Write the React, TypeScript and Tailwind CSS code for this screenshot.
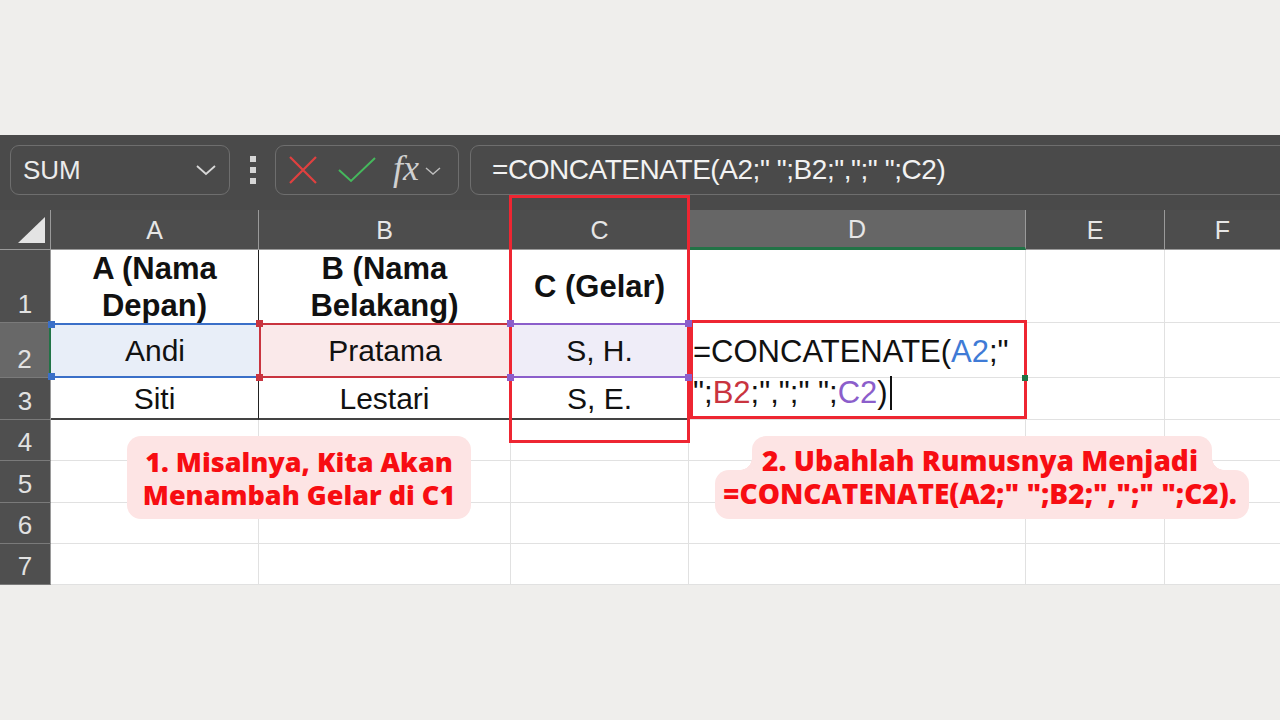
import React from "react";

const sans = { fontFamily: '"Liberation Sans", Arial, sans-serif' };

function Handle({ pos, color }: { pos: string; color: string }) {
  return <div className={`absolute z-10 w-[7px] h-[7px] ${pos} ${color}`} />;
}

export default function App() {
  return (
    <div className="relative w-[1280px] h-[720px] bg-[#efeeec] overflow-hidden" style={sans}>
      <div className="h-[135px]" />
      <div className="bg-[#4a4a4a]">
        {/* Formula bar */}
        <div className="h-[75px] flex items-start pt-[10px] pl-[10px] overflow-hidden">
          <div className="w-[220px] h-[50px] shrink-0 rounded-[9px] border border-[#6e6e6e] flex items-center justify-between pl-[12px] pr-[12px]">
            <span className="text-[26px] text-[#ececec] leading-none">SUM</span>
            <svg width="22" height="14" viewBox="0 0 22 14">
              <path d="M2 3 L11 11 L20 3" fill="none" stroke="#d8d8d8" strokeWidth="1.8" />
            </svg>
          </div>
          <div className="w-[45px] h-[50px] shrink-0 flex flex-col items-center justify-center gap-[5px]">
            <div className="w-[6px] h-[6px] bg-[#d6d6d6]" />
            <div className="w-[6px] h-[6px] bg-[#d6d6d6]" />
            <div className="w-[6px] h-[6px] bg-[#d6d6d6]" />
          </div>
          <div className="w-[184px] h-[50px] shrink-0 rounded-[9px] border border-[#6e6e6e] flex items-center pl-[12px]">
            <svg width="30" height="30" viewBox="0 0 30 30">
              <path d="M2 2 L28 28 M28 2 L2 28" stroke="#e0403f" strokeWidth="2.2" />
            </svg>
            <svg width="38" height="28" viewBox="0 0 38 28" className="ml-[20px]">
              <path d="M1 14 L13 25 L37 2" fill="none" stroke="#45b85c" strokeWidth="2" />
            </svg>
            <span className="ml-[17px] text-[36px] italic text-[#d0d0d0] leading-none -mt-[4px]" style={{ fontFamily: '"Liberation Serif", "Times New Roman", serif' }}>
              fx
            </span>
            <svg width="16" height="10" viewBox="0 0 16 10" className="ml-[6px] mt-[2px]">
              <path d="M1 2 L8 8 L15 2" fill="none" stroke="#bdbdbd" strokeWidth="1.4" />
            </svg>
          </div>
          <div className="ml-[11px] w-[830px] h-[50px] shrink-0 rounded-[9px] border border-[#6e6e6e] flex items-center pl-[21px]">
            <span className="text-[28px] tracking-[-0.45px] text-[#f2f2f2] leading-none whitespace-pre">
              =CONCATENATE(A2;" ";B2;",";" ";C2)
            </span>
          </div>
        </div>

        {/* Grid */}
        <div className="grid grid-cols-[51px_208px_252px_178px_337px_139px_115px] grid-rows-[40px_73px_55px_42px_41px_42px_41px_41px] bg-white">
          {/* Header row */}
          <div className="bg-[#4d4d4d] border-r border-b border-[#9a9a9a] relative">
            <svg width="51" height="40" viewBox="0 0 51 40" className="absolute left-0 top-0">
              <polygon points="18,33 45,33 45,7" fill="#e4e4e4" />
            </svg>
          </div>
          <div className="bg-[#4d4d4d] border-r border-b border-[#9a9a9a] flex items-center justify-center pt-[3px] text-[25px] text-[#e6e6e6]">A</div>
          <div className="bg-[#4d4d4d] border-r border-b border-[#9a9a9a] flex items-center justify-center pt-[3px] text-[25px] text-[#e6e6e6]">B</div>
          <div className="bg-[#4d4d4d] border-r border-b border-[#9a9a9a] flex items-center justify-center pt-[3px] text-[25px] text-[#e6e6e6]">C</div>
          <div className="bg-[#666666] border-r border-[#9a9a9a] border-b-[3px] border-b-[#217346] flex items-center justify-center pt-[3px] text-[25px] text-[#e6e6e6]">D</div>
          <div className="bg-[#4d4d4d] border-r border-b border-[#9a9a9a] flex items-center justify-center pt-[3px] text-[25px] text-[#e6e6e6]">E</div>
          <div className="bg-[#4d4d4d] border-b border-[#9a9a9a] flex items-center justify-center pt-[3px] text-[25px] text-[#e6e6e6]">F</div>

          {/* Row 1 */}
          <div className="bg-[#4f4f4f] border-r border-[#9a9a9a] border-b border-b-[#7a7a7a] flex items-end justify-center pb-[5px] text-[26px] leading-none text-[#e2e2e2]">1</div>
          <div className="border-r border-r-[#222] overflow-hidden text-center font-bold text-[31px] leading-[37px] text-[#111]">
            A (Nama<br />Depan)
          </div>
          <div className="border-r border-r-[#222] overflow-hidden text-center font-bold text-[31px] leading-[37px] text-[#111]">
            B (Nama<br />Belakang)
          </div>
          <div className="border-r border-r-[#222] flex items-center justify-center pt-[2px] font-bold text-[31px] text-[#111]">
            C (Gelar)
          </div>
          <div className="border-r border-b border-[#e1e1e1]" />
          <div className="border-r border-b border-[#e1e1e1]" />
          <div className="border-b border-[#e1e1e1]" />

          {/* Row 2 */}
          <div className="bg-[#686868] border-r-2 border-r-[#217346] border-b border-b-[#7a7a7a] flex items-end justify-center pb-[5px] text-[26px] leading-none text-[#e2e2e2]">2</div>
          <div className="relative bg-[#e8eef8] border-y-2 border-[#3a6fc8] flex items-center justify-center text-[30px] text-[#111]">
            Andi
            <Handle pos="-left-[3px] -top-[4px] w-[5px]" color="bg-[#3a6fc8]" />
            <Handle pos="-left-[3px] -bottom-[4px] w-[5px]" color="bg-[#3a6fc8]" />
          </div>
          <div className="relative bg-[#fae9ea] border-2 border-[#c9343f] flex items-center justify-center text-[30px] text-[#111]">
            Pratama
            <Handle pos="-left-[5px] -top-[5px]" color="bg-[#c9343f]" />
            <Handle pos="-left-[5px] -bottom-[5px]" color="bg-[#c9343f]" />
          </div>
          <div className="relative bg-[#efedf8] border-y-2 border-[#8b5ecb] border-r border-r-[#222] flex items-center justify-center text-[30px] text-[#111]">
            S, H.
            <Handle pos="-left-[4px] -top-[5px]" color="bg-[#8b5ecb]" />
            <Handle pos="-left-[4px] -bottom-[5px]" color="bg-[#8b5ecb]" />
            <Handle pos="-right-[4px] -top-[5px]" color="bg-[#8b5ecb]" />
            <Handle pos="-right-[4px] -bottom-[5px]" color="bg-[#8b5ecb]" />
          </div>
          <div className="relative border-r-2 border-r-[#217346] border-b border-b-[#e1e1e1]">
            <div className="pt-[8px] pl-[4px] text-[31px] leading-[41px] text-[#111] whitespace-pre">
              =CONCATENATE(<span className="text-[#3f7bd6]">A2</span>;"
              <br />
              ";<span className="text-[#c9343f]">B2</span>;",";" ";<span className="text-[#8b5ecb]">C2</span>)
              <span className="inline-block align-middle ml-[2px] -mt-[4px] w-[2px] h-[34px] bg-[#111]" />
            </div>
            <div className="absolute z-10 -right-[4px] -bottom-[4px] w-[6px] h-[6px] bg-[#217346]" />
          </div>
          <div className="border-r border-b border-[#e1e1e1]" />
          <div className="border-b border-[#e1e1e1]" />

          {/* Row 3 */}
          <div className="bg-[#4f4f4f] border-r border-[#9a9a9a] border-b border-b-[#7a7a7a] flex items-end justify-center pb-[5px] text-[26px] leading-none text-[#e2e2e2]">3</div>
          <div className="border-r border-r-[#222] border-b-2 border-b-[#444] flex items-center justify-center text-[30px] text-[#111]">Siti</div>
          <div className="border-r border-r-[#222] border-b-2 border-b-[#444] flex items-center justify-center text-[30px] text-[#111]">Lestari</div>
          <div className="border-r border-r-[#222] border-b-2 border-b-[#444] flex items-center justify-center text-[30px] text-[#111]">S, E.</div>
          <div className="border-r border-b border-[#e1e1e1]" />
          <div className="border-r border-b border-[#e1e1e1]" />
          <div className="border-b border-[#e1e1e1]" />

          {/* Rows 4-7 */}
          {["4", "5", "6", "7"].map((n) => (
            <React.Fragment key={n}>
              <div className="bg-[#4f4f4f] border-r border-[#9a9a9a] border-b border-b-[#7a7a7a] flex items-end justify-center pb-[5px] text-[26px] leading-none text-[#e2e2e2]">{n}</div>
              <div className="border-r border-b border-[#e1e1e1]" />
              <div className="border-r border-b border-[#e1e1e1]" />
              <div className="border-r border-b border-[#e1e1e1]" />
              <div className="border-r border-b border-[#e1e1e1]" />
              <div className="border-r border-b border-[#e1e1e1]" />
              <div className="border-b border-[#e1e1e1]" />
            </React.Fragment>
          ))}
        </div>
      </div>

      {/* Red highlight boxes */}
      <div className="absolute left-[509px] top-[195px] w-[181px] h-[248px] border-[3px] border-[#ee2632]" />
      <div className="absolute left-[690px] top-[320px] w-[337px] h-[99px] border-[3px] border-[#ee2632]" />

      {/* Annotation 1 */}
      <div
        className="absolute left-[127px] top-[436px] w-[344px] h-[83px] rounded-[14px] bg-[#fde4e4] flex flex-col items-center justify-center text-[#f70d12] font-extrabold text-[27px] leading-[33px] whitespace-nowrap"
        style={{ fontFamily: '"Open Sans", "Noto Sans", sans-serif' }}
      >
        <div>1. Misalnya, Kita Akan</div>
        <div>Menambah Gelar di C1</div>
      </div>

      {/* Annotation 2 */}
      <div className="absolute left-[752px] top-[436px] w-[460px] h-[46px] rounded-[14px] bg-[#fde4e4]" />
      <div className="absolute left-[715px] top-[470px] w-[534px] h-[49px] rounded-[14px] bg-[#fde4e4]" />
      <div className="absolute left-[740px] top-[458px] w-[12px] h-[12px] bg-[radial-gradient(circle_at_0_0,transparent_11.5px,#fde4e4_12px)]" />
      <div className="absolute left-[1212px] top-[458px] w-[12px] h-[12px] bg-[radial-gradient(circle_at_100%_0,transparent_11.5px,#fde4e4_12px)]" />
      <div
        className="absolute left-[680px] top-[444px] w-[600px] flex flex-col items-center text-[#f70d12] font-extrabold text-[28px] leading-[33px] whitespace-pre"
        style={{ fontFamily: '"Open Sans", "Noto Sans", sans-serif' }}
      >
        <div>2. Ubahlah Rumusnya Menjadi</div>
        <div>=CONCATENATE(A2;" ";B2;",";" ";C2).</div>
      </div>
    </div>
  );
}
